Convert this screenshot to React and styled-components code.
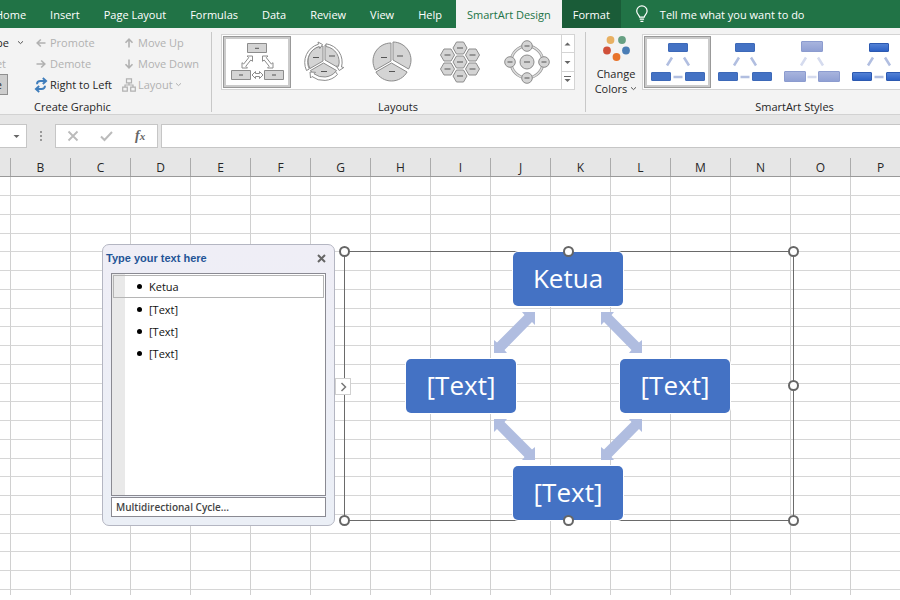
import React from 'react';
import styled, { createGlobalStyle } from 'styled-components';

const TABS = [
	'Home',
	'Insert',
	'Page Layout',
	'Formulas',
	'Data',
	'Review',
	'View',
	'Help',
	'SmartArt Design',
	'Format',
];

const COLUMNS = ['A', 'B', 'C', 'D', 'E', 'F', 'G', 'H', 'I', 'J', 'K', 'L', 'M', 'N', 'O', 'P'];
const ROWS = Array.from({ length: 22 }, (_, i) => i + 1);

const PANE_ITEMS = ['Ketua', '[Text]', '[Text]', '[Text]'];

const NODES = [
	{ id: 'top', label: 'Ketua', x: 168, y: 0 },
	{ id: 'left', label: '[Text]', x: 61, y: 107 },
	{ id: 'right', label: '[Text]', x: 275, y: 107 },
	{ id: 'bottom', label: '[Text]', x: 168, y: 214 },
];

const ARROWS = [
	{ x: 149, y: 60 },
	{ x: 256, y: 60, flip: true },
	{ x: 149, y: 167, flip: true },
	{ x: 256, y: 167 },
];

const HANDLES = [
	{ x: -6, y: -6 },
	{ x: 218, y: -6 },
	{ x: 443, y: -6 },
	{ x: 443, y: 128 },
	{ x: -6, y: 263 },
	{ x: 218, y: 263 },
	{ x: 443, y: 263 },
];

const ARROW_POINTS = '28,0 41,0 41,13 38,10 10.5,38 13,41 0,41 0,28 3,30.5 30.5,3';

const Chevron = ({ color = '#555' }) => (
	<svg width="7" height="7" viewBox="0 0 7 7" fill="none" stroke={color}>
		<path d="M1 2.3 3.5 4.6 6 2.3" />
	</svg>
);

const Arrow = ({ angle = 0 }) => (
	<svg width="12" height="12" viewBox="0 0 12 12" fill="none" stroke="#b1b1b1" strokeWidth="1.6">
		<g transform={`rotate(${angle} 6 6)`}>
			<path d="M10.5 6H2.5M5.8 2.5 2.2 6l3.6 3.5" />
		</g>
	</svg>
);

const SwapIcon = () => (
	<svg width="14" height="16" viewBox="0 0 14 16" fill="none" stroke="#3f7dbb" strokeWidth="1.9">
		<path d="M3 7.2C3 5 4.5 4 6.5 4H12M8.8 1l3.3 3-3.3 3" />
		<path d="M11 8.8C11 11 9.5 12 7.5 12H2M5.2 9l-3.3 3 3.3 3" />
	</svg>
);

const TreeIcon = () => (
	<svg width="14" height="14" viewBox="0 0 14 14" fill="none" stroke="#b1b1b1" strokeWidth="1.2">
		<path d="M4.5.8h5v4h-5zM.7 9.2h4.6v4H.7zM8.7 9.2h4.6v4H8.7zM7 4.8V7M3 9.2V7h8v2.2" />
	</svg>
);

const Bulb = () => (
	<svg width="14" height="18" viewBox="0 0 14 18" fill="none" stroke="#fff" strokeWidth="1.2">
		<path d="M4.6 12.2c0-2-2.9-3-2.9-6.2a5.1 5.1 0 0 1 10.4 0c0 3.2-2.9 4.2-2.9 6.2zM4.7 14.2h4.4M5.4 16.3h3" />
	</svg>
);

const Triangle = ({ up, bar }) => (
	<svg width="7" height="8" viewBox="0 0 7 8" fill="#666">
		{bar && <path d="M0 0h7v1H0z" />}
		<path d={up ? 'M.5 5.5 3.5 2.5l3 3z' : 'M.5 3l3 3 3-3z'} />
	</svg>
);

const GREY = { fill: '#d4d4d4', stroke: '#8c8c8c', strokeWidth: 1 };

const CycleBoxes = () => (
	<svg width="56" height="40" viewBox="0 0 56 40">
		<g {...GREY}>
			<path d="M18.5 1.5h19v9h-19zM2.5 28.5h19v9h-19zM35.5 28.5h19v9h-19z" />
			<g fill="#fff">
				<path d="M23.5 14H18l1.7 1.7-5 6.3-1.7-1.3V26h5.5l-1.7-1.7 5-6.3 1.7 1.3z" />
				<path d="M33.5 14H39l-1.7 1.7 5 6.3 1.7-1.3V26h-5.5l1.7-1.7-5-6.3-1.7 1.3z" />
				<path d="M23 33l3.5-3.5v2h4v-2L34 33l-3.5 3.5v-2h-4v2z" />
			</g>
			<path d="M26 6.3h4M10 33h4M43 33h4" stroke="#555" />
		</g>
	</svg>
);

const PieShape = ({ r }) => {
	const dx = r * 0.866;
	return (
		<g {...GREY}>
			<path d={`M22 19V${19 - r}A${r} ${r} 0 0 1 ${22 + dx} ${19 + r / 2}Z`} />
			<path d={`M20 20V${20 - r}A${r} ${r} 0 0 0 ${20 - dx} ${20 + r / 2}Z`} />
			<path d={`M20.5 22 ${20.5 - dx} ${22 + r / 2}A${r} ${r} 0 0 0 ${20.5 + dx} ${22 + r / 2}Z`} />
			<path d="M10 16.5h6M26 15h6M18 30.5h6" stroke="#555" />
		</g>
	);
};

const CyclePie = () => (
	<svg width="42" height="42" viewBox="0 0 42 42">
		<PieShape r={15} />
		<g fill="#fff" stroke="#8c8c8c">
			<path d="M3.5 29.5A19 19 0 0 1 15.500 3.200L15 1l4.500 2.500-2.700 4-.6-2A16 16 0 0 0 6.300 28z" />
			<path d="M23 2.800A18.500 18.500 0 0 1 38.500 26l2.300.5-4.500 3-3-4.500 2.200.3A15.500 15.500 0 0 0 23 5.500z" />
			<path d="M34.500 33.500A19 19 0 0 1 9 35.500L7.500 37 7 31l5.500.3-1.500 1.500a16 16 0 0 0 21.500-2z" />
		</g>
	</svg>
);

const Pie = () => (
	<svg width="42" height="42" viewBox="0 0 42 42">
		<PieShape r={18} />
	</svg>
);

const HEXES = [
	[20, 7],
	[7.5, 14],
	[32.5, 14],
	[20, 21],
	[7.5, 28],
	[32.5, 28],
	[20, 35],
];

const Hexes = () => (
	<svg width="40" height="42" viewBox="0 0 40 42">
		{HEXES.map(([x, y]) => (
			<g key={`${x}-${y}`} transform={`translate(${x} ${y})`} {...GREY}>
				<path d="M-7 0-3.5-6h7L7 0 3.5 6h-7z" />
				<path d="M-3 0h6" stroke="#555" />
			</g>
		))}
	</svg>
);

const Radial = () => (
	<svg width="46" height="44" viewBox="0 0 46 44">
		<circle cx="23" cy="22" r="16" fill="none" stroke="#999" strokeWidth="3" />
		<circle cx="23" cy="22" r="16" fill="none" stroke="#ddd" strokeWidth="1.5" />
		<g {...GREY}>
			<circle cx="23" cy="22" r="7" />
			<circle cx="23" cy="6" r="5.3" />
			<circle cx="6" cy="22" r="5.3" />
			<circle cx="40" cy="22" r="5.3" />
			<circle cx="23" cy="38" r="5.3" />
			<path d="M20 22h6M20.5 6h5M3.5 22h5M37.5 22h5M20.5 38h5" stroke="#555" />
		</g>
	</svg>
);

const StyleThumb = ({ tone }) => {
	const soft = tone === 'soft';
	const fill = { flat: '#4472c4', soft: 'url(#softFill)', deep: 'url(#deepFill)' }[tone];
	const edge = { flat: '#3d69b8', soft: '#8c9ccf', deep: '#2c59b0' }[tone];
	const g = soft ? 1 : 0;
	return (
		<svg width="56" height="42" viewBox="0 0 56 42">
			<defs>
				<linearGradient id="softFill" x2="0" y2="1">
					<stop stopColor="#a9b5de" />
					<stop offset="1" stopColor="#8f9fd3" />
				</linearGradient>
				<linearGradient id="deepFill" x2="0" y2="1">
					<stop stopColor="#5583d6" />
					<stop offset="1" stopColor="#2a5fc4" />
				</linearGradient>
			</defs>
			<g fill={fill} stroke={edge}>
				<rect x={18.5 - g} y={2.5 - 2 * g} width={19 + 2 * g} height={8 + 2 * g} rx="0.5" />
				<rect x={1.5 - g} y={31.5 - g} width={19 + 2 * g} height={8 + 2 * g} rx="0.5" />
				<rect x={35.5 - g} y={31.5 - g} width={19 + 2 * g} height={8 + 2 * g} rx="0.5" />
			</g>
			<g stroke={soft ? '#d5dbee' : '#b1bee0'} strokeWidth="2.5">
				<path d="M22 16.5l-5 8M34 16.5l5 8M23.5 36h9" />
			</g>
		</svg>
	);
};

const ColorDots = () => (
	<svg width="28" height="26" viewBox="0 0 28 26">
		<circle cx="8.5" cy="5" r="3.9" fill="#e8b062" />
		<circle cx="20" cy="5" r="3.9" fill="#67a083" />
		<circle cx="5" cy="15.5" r="3.9" fill="#d0503a" />
		<circle cx="24" cy="15.5" r="3.9" fill="#4a7db5" />
		<circle cx="14.5" cy="22" r="3.9" fill="#e8732b" />
	</svg>
);

const LAYOUTS = [
	{ name: 'Multidirectional Cycle', Icon: CycleBoxes },
	{ name: 'Segmented Cycle', Icon: CyclePie },
	{ name: 'Basic Pie', Icon: Pie },
	{ name: 'Hexagon Cluster', Icon: Hexes },
	{ name: 'Radial Cycle', Icon: Radial },
];

const STYLES = [
	{ name: 'Simple Fill', tone: 'flat' },
	{ name: 'White Outline', tone: 'flat' },
	{ name: 'Subtle Effect', tone: 'soft' },
	{ name: 'Intense Effect', tone: 'deep' },
];

const App = () => (
	<>
		<GlobalStyle />
		<Container>
			<TabBar>
				{TABS.map((tab) => (
					<Tab key={tab} $active={tab === 'SmartArt Design'} $context={tab === 'Format'}>
						{tab}
					</Tab>
				))}
				<TellMe>
					<Bulb />
					Tell me what you want to do
				</TellMe>
			</TabBar>

			<Ribbon>
				<CreateGroup>
					<GroupBody>
						<CutColumn>
							<Command>
								Add Shape <Caret><Chevron /></Caret>
							</Command>
							<Command disabled $inset={18}>Add Bullet</Command>
							<PressedCommand aria-pressed="true">Text Pane</PressedCommand>
						</CutColumn>
						<CommandColumn>
							<Command disabled>
								<IconSlot><Arrow /></IconSlot>Promote
							</Command>
							<Command disabled>
								<IconSlot><Arrow angle={180} /></IconSlot>Demote
							</Command>
							<Command>
								<IconSlot><SwapIcon /></IconSlot>Right to Left
							</Command>
						</CommandColumn>
						<CommandColumn>
							<Command disabled>
								<IconSlot><Arrow angle={90} /></IconSlot>Move Up
							</Command>
							<Command disabled>
								<IconSlot><Arrow angle={-90} /></IconSlot>Move Down
							</Command>
							<Command disabled>
								<IconSlot><TreeIcon /></IconSlot>Layout <Chevron color="#b1b1b1" />
							</Command>
						</CommandColumn>
					</GroupBody>
					<CreateLabel>Create Graphic</CreateLabel>
				</CreateGroup>

				<LayoutsGroup>
					<GroupBody>
						<Gallery>
							{LAYOUTS.map(({ name, Icon }, i) => (
								<Thumb key={name} aria-label={name} $selected={i === 0}>
									<Icon />
								</Thumb>
							))}
							<Scroller>
								<ScrollButton aria-label="Previous row"><Triangle up /></ScrollButton>
								<ScrollButton aria-label="Next row"><Triangle /></ScrollButton>
								<ScrollButton aria-label="More"><Triangle bar /></ScrollButton>
							</Scroller>
						</Gallery>
					</GroupBody>
					<GroupLabel>Layouts</GroupLabel>
				</LayoutsGroup>

				<StylesGroup>
					<GroupBody>
						<ChangeColors>
							<ColorDots />
							<span>Change</span>
							<span>Colors <Chevron /></span>
						</ChangeColors>
						<Gallery>
							{STYLES.map(({ name, tone }, i) => (
								<StyleButton key={name} aria-label={name} $selected={i === 0}>
									<StyleThumb tone={tone} />
								</StyleButton>
							))}
						</Gallery>
					</GroupBody>
					<GroupLabel>SmartArt Styles</GroupLabel>
				</StylesGroup>
			</Ribbon>

			<FormulaBar>
				<NameBox aria-label="Name box">
					<Triangle />
				</NameBox>
				<Grip viewBox="0 0 2 11" fill="#999">
					<path d="M0 0h2v2H0zM0 4h2v2H0zM0 8h2v2H0z" />
				</Grip>
				<FormulaButtons>
					<FormulaButton aria-label="Cancel">
						<svg width="12" height="12" viewBox="0 0 12 12" stroke="#bbb" strokeWidth="1.8">
							<path d="M1.5 1.5l9 9M10.5 1.5l-9 9" />
						</svg>
					</FormulaButton>
					<FormulaButton aria-label="Enter">
						<svg width="13" height="12" viewBox="0 0 13 12" fill="none" stroke="#bbb" strokeWidth="2">
							<path d="M1 6.5l3.5 3.5L12 2" />
						</svg>
					</FormulaButton>
					<FormulaButton aria-label="Insert function">
						<Fx>f<small>x</small></Fx>
					</FormulaButton>
				</FormulaButtons>
				<FormulaInput aria-label="Formula" />
			</FormulaBar>

			<Sheet>
				<Grid>
					<colgroup>
						{COLUMNS.map((c) => (
							<Col key={c} $first={c === 'A'} />
						))}
					</colgroup>
					<thead>
						<tr>
							{COLUMNS.map((c) => (
								<HeadCell key={c} scope="col" aria-label={c}>
									<span>{c !== 'A' && c}</span>
								</HeadCell>
							))}
						</tr>
					</thead>
					<tbody>
						{ROWS.map((r) => (
							<Row key={r}>
								{COLUMNS.map((c) => (
									<Cell key={c} />
								))}
							</Row>
						))}
						<LastRow>
							{COLUMNS.map((c) => (
								<Cell key={c} />
							))}
						</LastRow>
					</tbody>
				</Grid>

				<Diagram>
					<Connectors viewBox="0 0 448 268">
						{ARROWS.map(({ x, y, flip }) => (
							<polygon
								key={`${x}-${y}`}
								points={ARROW_POINTS}
								transform={flip ? `translate(${x + 41} ${y}) scale(-1 1)` : `translate(${x} ${y})`}
							/>
						))}
					</Connectors>
					{NODES.map(({ id, label, x, y }) => (
						<Node key={id} $x={x} $y={y}>
							{label}
						</Node>
					))}
					{HANDLES.map(({ x, y }) => (
						<Handle key={`${x}-${y}`} $x={x} $y={y} />
					))}
					<PaneToggle aria-label="Hide text pane">
						<svg width="7" height="10" viewBox="0 0 7 10" fill="none" stroke="#777" strokeWidth="1.5">
							<path d="M1.5 1l4 4-4 4" />
						</svg>
					</PaneToggle>
				</Diagram>

				<TextPane>
					<PaneHeader>
						<PaneTitle>Type your text here</PaneTitle>
						<CloseButton aria-label="Close">
							<svg width="9" height="9" viewBox="0 0 9 9" stroke="#666" strokeWidth="2">
								<path d="M1 1l7 7M8 1L1 8" />
							</svg>
						</CloseButton>
					</PaneHeader>
					<PaneList>
						{PANE_ITEMS.map((item, i) => (
							<PaneItem key={i} $selected={i === 0}>
								{item}
							</PaneItem>
						))}
					</PaneList>
					<PaneFooter>Multidirectional Cycle...</PaneFooter>
				</TextPane>
			</Sheet>
		</Container>
	</>
);

const Container = styled.div`
	display: flex;
	flex-direction: column;
	min-height: 100vh;
	overflow: hidden;
`;

const TabBar = styled.nav`
	display: flex;
	height: 28px;
	margin-left: -17px;
	background: #217346;
	color: #fff;
`;

const Tab = styled.button`
	flex: none;
	margin-left: ${(p) => (p.$active ? 2 : 0)}px;
	padding: 0 ${(p) => (p.$active || p.$context ? 11 : 12)}px;
	background: ${(p) => (p.$active ? '#f3f3f3' : p.$context ? '#1a5c38' : 'transparent')};
	color: ${(p) => (p.$active ? '#217346' : '#fff')};
`;

const TellMe = styled.button`
	display: flex;
	align-items: center;
	gap: 11px;
	padding: 0 14px;
	color: #fff;
`;

const Ribbon = styled.section`
	display: flex;
	height: 87px;
	padding-top: 4px;
	background: #f3f3f3;
	border-bottom: 1px solid #d2d2d2;
`;

const Group = styled.div`
	display: flex;
	flex-direction: column;
	height: 80px;
	border-right: 1px solid #c8c8c8;
`;

const CreateGroup = styled(Group)`
	flex: 0 0 212px;
`;

const LayoutsGroup = styled(Group)`
	flex: 0 0 374px;
	padding: 2px 10px 0 9px;
`;

const StylesGroup = styled(Group)`
	flex: 1 0 418px;
	padding-top: 2px;
`;

const GroupBody = styled.div`
	display: flex;
	flex: 1;
	align-items: flex-start;
	min-height: 0;
`;

const GroupLabel = styled.div`
	flex: none;
	line-height: 10px;
	text-align: center;
`;

const CreateLabel = styled(GroupLabel)`
	padding-right: 72px;
	padding-left: 0;
	text-indent: 6px;
`;

const CommandColumn = styled.div`
	display: flex;
	flex-direction: column;
	align-items: flex-start;
	margin-left: 9px;
`;

const CutColumn = styled.div`
	display: flex;
	flex: none;
	flex-direction: column;
	align-items: flex-end;
	width: 24px;
`;

const Command = styled.button`
	display: flex;
	flex: none;
	align-items: center;
	gap: 2px;
	height: 21px;
	padding-right: ${(p) => p.$inset || 0}px;
	color: #262626;

	&:disabled {
		color: #b1b1b1;
	}
`;

const PressedCommand = styled(Command)`
	margin-right: 16px;
	padding-right: 5px;
	background: #cdcdcd;
	border: 1px solid #8f8f8f;
`;

const Caret = styled.span`
	display: flex;
	padding: 0 0 0 6px;
`;

const IconSlot = styled.span`
	display: flex;
	justify-content: center;
	width: 15px;
`;

const Gallery = styled.div`
	display: flex;
	flex: 1;
	height: 56px;
	padding-left: 1px;
	background: #fff;
	border: 1px solid #d4d4d4;
`;

const Thumb = styled.button`
	display: flex;
	flex: 1;
	align-items: center;
	justify-content: center;
	margin: 1px 0;
	border: 1px solid ${(p) => (p.$selected ? '#999' : 'transparent')};
	box-shadow: ${(p) => (p.$selected ? 'inset 0 0 0 2px #cbcbcb' : 'none')};
`;

const StyleButton = styled(Thumb)`
	flex: 0 0 67px;
`;

const Scroller = styled.div`
	display: flex;
	flex: 0 0 13px;
	flex-direction: column;
	border-left: 1px solid #d4d4d4;
`;

const ScrollButton = styled.button`
	display: flex;
	flex: 1;
	align-items: center;
	justify-content: center;

	& + & {
		border-top: 1px solid #d4d4d4;
	}
`;

const ChangeColors = styled.button`
	display: flex;
	flex: 0 0 56px;
	flex-direction: column;
	align-items: center;
	padding-left: 4px;
	line-height: 15px;

	> svg {
		flex: none;
		margin: 1px 0 5px;
	}

	span {
		display: flex;
		flex: none;
		gap: 3px;
		align-items: center;
	}
`;

const FormulaBar = styled.div`
	display: flex;
	align-items: stretch;
	height: 33px;
	padding-top: 9px;
	background: #e6e6e6;
`;

const NameBox = styled.button`
	display: flex;
	flex: 0 0 27px;
	align-items: center;
	justify-content: flex-end;
	padding-right: 6px;
	background: #fff;
	border: 1px solid #c6c6c6;
	border-left: 0;
`;

const Grip = styled.svg`
	flex: none;
	align-self: center;
	width: 2px;
	height: 11px;
	margin: 0 13px;
`;

const FormulaButtons = styled.div`
	display: flex;
	flex: 0 0 103px;
	background: #fff;
	border: 1px solid #c6c6c6;
`;

const FormulaButton = styled.button`
	display: flex;
	flex: 1;
	align-items: center;
	justify-content: center;
`;

const Fx = styled.span`
	font: italic bold 14px 'Liberation Serif', serif;
	color: #666;

	small {
		font-size: 11px;
	}
`;

const FormulaInput = styled.input`
	flex: 1;
	min-width: 0;
	margin-left: 3px;
	background: #fff;
	border: 1px solid #c6c6c6;
	border-right: 0;
`;

const Sheet = styled.main`
	position: relative;
	flex: 1;
	overflow: hidden;
`;

const Grid = styled.table`
	width: 911px;
	table-layout: fixed;
	border-collapse: separate;
	border-spacing: 0;
`;

const Col = styled.col`
	width: ${(p) => (p.$first ? 11 : 60)}px;
`;

const HeadCell = styled.th`
	height: 29px;
	padding: 10px 0 0;
	font-weight: 400;
	font-size: 12px;
	background: #e6e6e6;
	border-bottom: 1px solid #999;

	span {
		display: block;
		height: 18px;
		line-height: 19px;
		border-right: 1px solid #ababab;
	}
`;

const Cell = styled.td`
	padding: 0;
	border-right: 1px solid #d0d0d0;
	border-bottom: 1px solid #d6d6d6;
`;

const Row = styled.tr`
	height: 19px;

	&:nth-child(4n) {
		height: 18px;
	}
`;

const LastRow = styled.tr`
	height: 5px;

	td {
		border-bottom: 0;
	}
`;

const Diagram = styled.section`
	position: absolute;
	top: 103px;
	left: 344px;
	width: 450px;
	height: 270px;
	border: 1px solid #6a6a6a;
`;

const Connectors = styled.svg`
	display: block;
	width: 448px;
	height: 268px;
	fill: #b0bde0;
`;

const Node = styled.div`
	position: absolute;
	top: ${(p) => p.$y}px;
	left: ${(p) => p.$x}px;
	display: flex;
	align-items: center;
	justify-content: center;
	width: 110px;
	height: 54px;
	padding-bottom: 3px;
	font-size: 26px;
	color: #fff;
	background: #4472c4;
	border-radius: 5px;
	box-shadow: 0 0 0 1px #fff;
`;

const Handle = styled.span`
	position: absolute;
	top: ${(p) => p.$y}px;
	left: ${(p) => p.$x}px;
	width: 11px;
	height: 11px;
	background: #fff;
	border: 2px solid #666;
	border-radius: 50%;
`;

const PaneToggle = styled.button`
	position: absolute;
	top: 126px;
	left: -10px;
	display: flex;
	align-items: center;
	justify-content: center;
	width: 16px;
	height: 17px;
	background: #fff;
	border: 1px solid #d0d0d0;
`;

const TextPane = styled.aside`
	position: absolute;
	top: 96px;
	left: 102px;
	display: flex;
	flex-direction: column;
	gap: 1px;
	width: 233px;
	height: 282px;
	padding: 0 8px 8px;
	background: linear-gradient(#efeef6, #ebeff6);
	border: 1px solid #b4b6c2;
	border-radius: 7px;
`;

const PaneHeader = styled.header`
	display: flex;
	align-items: center;
	justify-content: space-between;
	height: 27px;
	margin-left: -5px;
	padding-bottom: 1px;
`;

const PaneTitle = styled.h2`
	margin: 0;
	font: bold 11px 'Liberation Sans', sans-serif;
	color: #1f5596;
`;

const CloseButton = styled.button`
	display: flex;
`;

const PaneList = styled.ul`
	flex: 1;
	margin: 0;
	padding: 1px;
	list-style: none;
	background: linear-gradient(90deg, #e9e9e9 13px, #fff 13px);
	border: 1px solid #8a8a92;
`;

const PaneItem = styled.li`
	display: flex;
	align-items: center;
	height: ${(p) => (p.$selected ? 23 : 22)}px;
	padding-left: 23px;
	border: 1px solid ${(p) => (p.$selected ? '#b5b5b5' : 'transparent')};
	color: #111;

	&::before {
		content: '';
		width: 5px;
		height: 5px;
		margin-right: 7px;
		background: #000;
		border-radius: 50%;
	}
`;

const PaneFooter = styled.footer`
	height: 20px;
	padding-left: 4px;
	font-weight: 600;
	font-size: 10px;
	line-height: 18px;
	color: #444;
	background: #fff;
	border: 1px solid #8a8a92;
`;

const GlobalStyle = createGlobalStyle`
	*, *::before {
		box-sizing: border-box;
	}

	body {
		margin: 0;
		overflow: hidden;
		font: 11px 'Open Sans', sans-serif;
		color: #262626;
		background: #fff;
	}

	button {
		padding: 0;
		font: inherit;
		color: inherit;
		white-space: nowrap;
		background: none;
		border: 0;
	}
`;

export default App;
